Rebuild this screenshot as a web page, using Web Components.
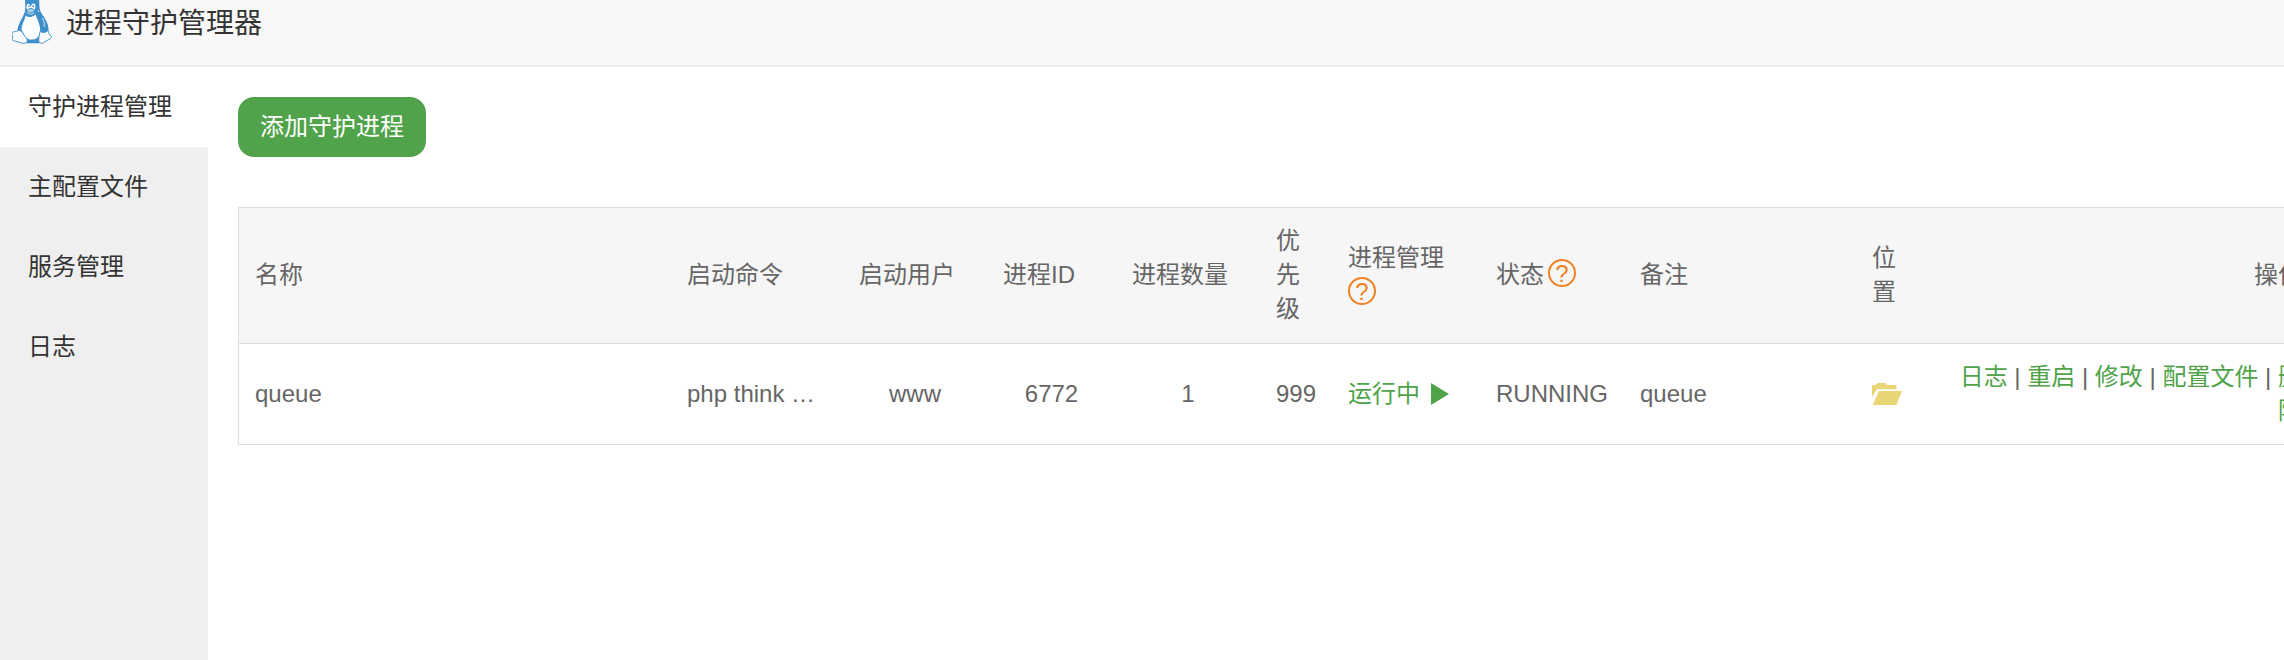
<!DOCTYPE html>
<html lang="zh-CN">
<head>
<meta charset="utf-8">
<title>进程守护管理器</title>
<style>
  html, body { height: 100%; }
  body {
    margin: 0;
    overflow: hidden;
    background: #fff;
    color: #666;
    font: 24px/34px "Liberation Sans", Arial, "Noto Sans CJK SC", sans-serif;
    --green: #50a34a;
    --orange: #f08228;
    --line: #ddd;
  }
</style>
</head>
<body>
<supervisor-app>
  <panel-header slot="header">进程守护管理器</panel-header>
  <side-nav slot="nav">
    <side-item active>守护进程管理</side-item>
    <side-item>主配置文件</side-item>
    <side-item>服务管理</side-item>
    <side-item>日志</side-item>
  </side-nav>
  <green-button>添加守护进程</green-button>
  <process-table></process-table>
</supervisor-app>

<script>
  /** Attaches an open shadow root filled from a <template>. */
  class BaseElement extends HTMLElement {
    constructor() {
      super();
      const template = document.createElement("template");
      template.innerHTML = this.constructor.html;
      this.attachShadow({mode: "open"});
      this.shadowRoot.appendChild(document.importNode(template.content, true));
    }
  }

  customElements.define("supervisor-app", class extends BaseElement {
    static get html() {
      return `
        <style>
          :host { display: flex; flex-direction: column; height: 100%; }
          .body { display: flex; flex: 1; min-height: 0; }
          main {
            display: flex;
            flex-direction: column;
            align-items: flex-start;
            flex: 1;
            min-width: 0;
            gap: 50px;
            padding: 30px 0 0 30px;
            overflow: hidden;
          }
        </style>
        <slot name="header"></slot>
        <div class="body">
          <slot name="nav"></slot>
          <main><slot></slot></main>
        </div>`;
    }
  });

  customElements.define("panel-header", class extends BaseElement {
    static get html() {
      return `
        <style>
          :host { display: block; background: #f8f8f8; border-bottom: 2px solid #ebebeb; }
          header { display: flex; gap: 14px; padding: 0 12px 17px; }
          h1 { margin: 0; color: #333; font-size: 28px; font-weight: 400; line-height: 48px; }
        </style>
        <header><tux-icon></tux-icon><h1><slot></slot></h1></header>`;
    }
  });

  customElements.define("tux-icon", class extends BaseElement {
    static get html() {
      return `
        <style>
          :host { display: block; width: 40px; height: 46px; }
          svg { display: block; }
        </style>
        <svg width="40" height="46" viewBox="12 0 40 46" aria-hidden="true">
          <path fill="#3d8ec9" d="M25 0h14.200l.3 8c.4 4 3 6.500 5.400 10.500 2.300 3.800 4 8 3.500 11.800l-.8 2.500-5.600 8.200-1.500 2.200H27l-5.500-6-4-5.500c-.3-3.500 1.200-7 3-10.700C23 16 25.300 13 25.300 8z"/>
          <path fill="#fff" d="M25.800 15.500c1.500 1.200 3 1.700 4.600 1.600 2-.2 3.900-1.800 5.200-2.700 1.500 5 4 9 4.500 14 .5 5.500-1.500 10-6.800 11-3.500.4-6-.5-7.600-2-1.500-3-3-5.500-4.200-7.800 0-4.500 2.800-9 4.300-14.100z"/>
          <path fill="#fff" d="M26.400 6.800c.1-1.800 1-3 2-3 1 0 1.600 1 1.700 2.700l1 0c.2-2 1-3 2.300-3 1.400 0 2.100 1.300 2 3.300 0 1.400-.4 2.300-1 2.900l-3.300-1.900-4 1.800c-.4-.7-.7-1.600-.7-2.800z"/>
          <circle cx="28.700" cy="6.400" r=".8" fill="#3d8ec9"/>
          <circle cx="33.200" cy="6.200" r=".9" fill="#3d8ec9"/>
          <path fill="#a9cfe9" stroke="#3d8ec9" stroke-width=".7" d="M26.800 10.300c1.300-1 2.700-2 4-1.900 1.400.1 2.900.9 3.900 1.600-.8 1.700-2.800 3-4.500 3.100-1.400 0-2.700-1.300-3.400-2.800z"/>
          <path fill="none" stroke="#fff" stroke-width=".8" d="M27 12c2 3 5 2.600 7.500.3M38 10l1 2M42.500 18c1.600 3 2.200 6 1.600 9"/>
          <path fill="#f8fafc" stroke="#3d8ec9" stroke-width=".9" stroke-linejoin="round" d="M18.200 30.500c2.300-.6 4 1.300 5.300 3.800 1.300 2.200 3.600 3.900 3.800 5.900.1 2.200-1.800 3.500-4.100 3.200-3.400-.6-6.500-2.200-10.200-2.900-1.300-.4-.7-2-.5-3.500.2-1.800-1-3.700-.2-4.600 1.400-1 4.300-.5 5.900-1.900z"/>
          <path fill="#f8fafc" stroke="#3d8ec9" stroke-width=".9" stroke-linejoin="round" d="M40 31.300c1.800 1.400 4.800 1.800 6.900-.1l1.200-.5c.8 1.500.6 3 1.500 4.100 1 1.200 2.400 1.500 2.200 2.400-1.700 2.500-5.500 3.100-7.700 5.100-1.500 1.300-4.100 1.400-5.100-.6-.9-2.800.6-7 1-10.400z"/>
        </svg>`;
    }
  });

  customElements.define("side-nav", class extends BaseElement {
    static get html() {
      return `
        <style>
          :host { display: block; flex: none; width: 208px; background: #efefef; }
          nav { display: flex; flex-direction: column; }
        </style>
        <nav><slot></slot></nav>`;
    }
  });

  customElements.define("side-item", class extends BaseElement {
    static get html() {
      return `
        <style>
          :host { display: block; }
          :host([active]) { background: #fff; }
          a { display: block; padding: 0 28px; color: #333; line-height: 80px; text-decoration: none; }
        </style>
        <a href="#"><slot></slot></a>`;
    }
  });

  customElements.define("green-button", class extends BaseElement {
    static get html() {
      return `
        <style>
          :host { display: block; }
          button {
            display: block;
            height: 60px;
            padding: 0 22px;
            border: 0;
            border-radius: 16px;
            background: var(--green);
            color: #fff;
            font: inherit;
            cursor: pointer;
          }
        </style>
        <button type="button"><slot></slot></button>`;
    }
  });

  customElements.define("help-mark", class extends BaseElement {
    static get html() {
      return `
        <style>
          :host { display: block; padding-bottom: 4px; }
          a {
            display: block;
            box-sizing: border-box;
            width: 28px;
            height: 28px;
            border: 2px solid var(--orange);
            border-radius: 50%;
            color: var(--orange);
            font-size: 24px;
            line-height: 26px;
            text-align: center;
            text-decoration: none;
          }
        </style>
        <a href="#">?</a>`;
    }
  });

  customElements.define("run-state", class extends BaseElement {
    static get html() {
      return `
        <style>
          :host { display: block; }
          a { display: flex; align-items: center; gap: 11px; color: var(--green); text-decoration: none; }
        </style>
        <a href="#"><slot></slot>
          <svg width="18" height="22" viewBox="0 0 18 22" aria-hidden="true"><path fill="currentColor" d="M0 0l18 11L0 22z"/></svg>
        </a>`;
    }
  });

  customElements.define("folder-link", class extends BaseElement {
    static get html() {
      return `
        <style>
          :host { display: block; }
          a { display: block; width: 30px; color: #e9d576; }
          svg { display: block; }
        </style>
        <a href="#" aria-label="打开目录">
          <svg width="30" height="22" viewBox="0 0 30 22"><path fill="currentColor" d="M0 2h4l1.500-2h8L15 2h9.500v4.200H5L0 14zM7 8h23l-5.500 14H.5z"/></svg>
        </a>`;
    }
  });

  customElements.define("process-table", class extends BaseElement {
    static get html() {
      return `
        <style>
          :host { display: block; width: 100%; }
          table {
            width: 100%;
            min-width: 2081px;
            table-layout: fixed;
            border: 1px solid var(--line);
            border-spacing: 0;
          }
          th, td { padding: 16px; text-align: left; font-weight: 400; vertical-align: middle; }
          th { padding-bottom: 17px; background: #f6f6f6; border-bottom: 1px solid var(--line); }
          td.center { text-align: center; }
          th.right, td.right { text-align: right; }
          .cut { overflow: hidden; text-overflow: ellipsis; white-space: nowrap; }
          .label { display: flex; flex-wrap: wrap; align-items: center; column-gap: 4px; row-gap: 2px; }
          td a { color: var(--green); text-decoration: none; }
        </style>
        <table>
          <colgroup>
            <col>
            <col style="width: 172px">
            <col style="width: 144px">
            <col style="width: 129px">
            <col style="width: 144px">
            <col style="width: 72px">
            <col style="width: 148px">
            <col style="width: 144px">
            <col style="width: 232px">
            <col style="width: 72px">
            <col style="width: 390px">
          </colgroup>
          <thead>
            <tr>
              <th>名称</th>
              <th>启动命令</th>
              <th>启动用户</th>
              <th>进程ID</th>
              <th>进程数量</th>
              <th>优先级</th>
              <th><div class="label">进程管理<help-mark></help-mark></div></th>
              <th><div class="label">状态<help-mark></help-mark></div></th>
              <th>备注</th>
              <th>位置</th>
              <th class="right">操作</th>
            </tr>
          </thead>
          <tbody>
            <tr>
              <td>queue</td>
              <td class="cut">php think …</td>
              <td class="center">www</td>
              <td class="center">6772</td>
              <td class="center">1</td>
              <td>999</td>
              <td><run-state>运行中</run-state></td>
              <td>RUNNING</td>
              <td>queue</td>
              <td><folder-link></folder-link></td>
              <td class="right"><a href="#">日志</a> | <a href="#">重启</a> | <a href="#">修改</a> | <a href="#">配置文件</a> | <a href="#">删除</a></td>
            </tr>
          </tbody>
        </table>`;
    }
  });
</script>
</body>
</html>
